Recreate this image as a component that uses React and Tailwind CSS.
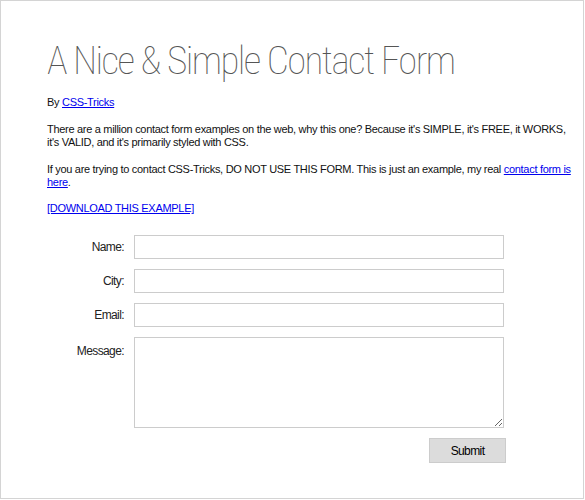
export default function App() {
  return (
    <div className="w-[585px] h-[500px] bg-white">
      <div className="w-[584px] h-[499px] border border-[#d4d4d4] box-border pl-[46px] pt-[36px] font-['Liberation_Sans',Arial,sans-serif]">
        <h1 className="font-['Roboto',sans-serif] font-thin font-stretch-condensed text-[39px] leading-[48px] text-[#555] tracking-[-1.6px]">
          A Nice &amp; Simple Contact Form
        </h1>
        <div className="text-[11px] leading-[13px] text-[#111] mt-[11px] w-[534px] tracking-[-0.3px]">
          <p className="mb-[14px]">
            By <a href="#" className="text-[#0000ee] underline">CSS-Tricks</a>
          </p>
          <p className="mb-[14px]">
            There are a million contact form examples on the web, why this one? Because it's SIMPLE, it's FREE, it WORKS,
            <br />
            it's VALID, and it's primarily styled with CSS.
          </p>
          <p className="mb-[13px]">
            If you are trying to contact CSS-Tricks, DO NOT USE THIS FORM. This is just an example, my real{" "}
            <a href="#" className="text-[#0000ee] underline">
              contact form is
              <br />
              here
            </a>
            .
          </p>
          <p>
            <a href="#" className="text-[#0000ee] underline">[DOWNLOAD THIS EXAMPLE]</a>
          </p>
        </div>
        <form className="mt-[20px] grid grid-cols-[77px_370px] gap-x-[10px] gap-y-[10px] text-[12px] tracking-[-0.6px] text-[#222]">
          <label className="text-right self-center">Name:</label>
          <input className="h-[24px] border border-[#ccc] bg-white outline-none" />
          <label className="text-right self-center">City:</label>
          <input className="h-[24px] border border-[#ccc] bg-white outline-none" />
          <label className="text-right self-center">Email:</label>
          <input className="h-[24px] border border-[#ccc] bg-white outline-none" />
          <label className="text-right pt-[5px]">Message:</label>
          <textarea className="h-[91px] border border-[#ccc] bg-white outline-none block" />
          <div />
          <div className="flex justify-end">
            <button type="button" className="w-[77px] h-[25px] mr-[-2px] bg-[#dcdcdc] border border-[#ccc] text-[12px] tracking-[-0.6px] text-black">
              Submit
            </button>
          </div>
        </form>
      </div>
    </div>
  );
}
